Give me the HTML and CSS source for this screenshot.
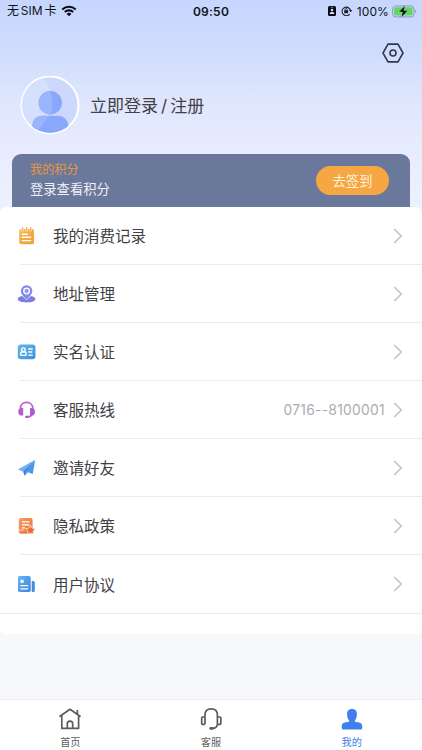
FILE: index.html
```html
<!DOCTYPE html>
<html lang="zh-CN">
<head>
<meta charset="utf-8">
<meta name="viewport" content="width=device-width, initial-scale=1">
<title>我的</title>
<link rel="stylesheet" href="styles.css">
</head>
<body>
<div class="app">
  <header class="header">
    <div class="status">
      <div class="status-left">
        <span class="carrier">无<span class="sim">SIM</span>卡</span>
        <svg class="wifi" width="16" height="12" viewBox="0 0 16 12"><path d="M1.3 4.5a9.7 9.7 0 0 1 13.4 0M3.8 7.1a6.1 6.1 0 0 1 8.4 0" fill="none" stroke="#080b14" stroke-width="2.1"/><path d="M8 11.2 5.6 8.9a3.5 3.5 0 0 1 4.8 0z" fill="#080b14"/></svg>
      </div>
      <span class="time">09:50</span>
      <div class="status-right">
        <svg width="8" height="10" viewBox="0 0 8 10"><rect width="8" height="10" rx="1.5" fill="#0a0c12"/><path d="M2.8 1.3h2.4" stroke="#cbd8fc" stroke-width=".6"/><circle cx="4" cy="4" r="1.3" fill="#cbd8fc"/><path d="M1.6 8c0-3 4.8-3 4.8 0z" fill="#cbd8fc"/></svg>
        <svg class="lock" width="12" height="10" viewBox="0 0 12 10"><path d="M8.7 8.1A4.3 4.3 0 1 1 9.4 4" fill="none" stroke="#20242f" stroke-width="1.1"/><path d="M7.8 4h3.5L9.6 6.2z" fill="#20242f"/><rect x="3.2" y="4.3" width="3.9" height="3" rx=".5" fill="#15181f"/><path d="M4 4.5v-.8a1.15 1.15 0 0 1 2.3 0v.8" fill="none" stroke="#15181f" stroke-width=".8"/></svg>
        <span class="percent">100%</span>
        <svg width="25" height="13" viewBox="0 0 25 13"><rect x=".6" y=".9" width="21.4" height="11" rx="3.2" fill="none" stroke="#8d98b2"/><rect x="2" y="2.3" width="18.6" height="8.2" rx="1.9" fill="#64d468"/><path d="M23.2 4.7c1.4.4 1.4 3 0 3.4z" fill="#8d98b2"/><path d="M13.1.3 6.8 7h3.7l-1.2 5.6 6.5-7h-3.9z" fill="#05100a" stroke="#b9dfcd" stroke-width=".4"/></svg>
      </div>
    </div>
    <div class="toolbar">
      <svg width="22" height="20" viewBox="0 0 22 20" fill="none" stroke="#33384a" stroke-width="1.6" stroke-linejoin="round"><path d="M6 1.1h10l5 8.9-5 8.9H6L1 10z"/><circle cx="11" cy="10" r="3"/></svg>
    </div>
    <div class="profile">
      <svg class="avatar" width="60" height="60" viewBox="0 0 60 60">
        <defs><clipPath id="face"><circle cx="30" cy="29" r="28"/></clipPath></defs>
        <circle cx="30" cy="29" r="28.5" fill="#ccd9fc" stroke="#fff" stroke-width="2"/>
        <g clip-path="url(#face)">
          <path d="M0 0h23q12 18 7 39L12 60H0z" fill="#d5e0fd"/>
          <circle cx="30.3" cy="26.8" r="11.7" fill="#8aa8fb"/>
          <path d="M27 15.6a11.7 11.7 0 0 0-2.4 21.4q3 1.7 6.3 1.4Q34 26 30.5 15.1z" fill="#9bb5fc"/>
          <rect x="12.3" y="39.8" width="36" height="24" rx="10" fill="#8aa8fb"/>
          <path d="M22.3 39.8h7L16 57l-3.7-7.2q0-10 10-10" fill="#9bb5fc"/>
        </g>
      </svg>
      <span class="login">立即登录<span class="slash">/</span>注册</span>
    </div>
    <section class="points">
      <div class="points-text">
        <div class="points-label">我的积分</div>
        <div class="points-hint">登录查看积分</div>
      </div>
      <button class="checkin">去签到</button>
    </section>
  </header>

  <main class="list">
    <div class="row">
      <svg class="icon" viewBox="0 0 20 20"><defs><linearGradient id="gold" x2="1" y2="1"><stop stop-color="#f8bd58"/><stop offset="1" stop-color="#f09b36"/></linearGradient></defs><rect x="2.2" y="3" width="14.8" height="15.2" rx="2" fill="url(#gold)"/><path d="M5.7 1.2v4M9.7 1.2v4M13.7 1.2v4" stroke="#fff" stroke-width="2.2"/><path d="M5.7 1.7v3M9.7 1.7v3M13.7 1.7v3" stroke="#f4ae47" stroke-width="1.3" stroke-linecap="round"/><path d="M5.3 8.2h5M5.3 11.3h8.4M5.3 14.6h8.4" stroke="#fff" stroke-width="1.4" stroke-linecap="round"/></svg>
      <span class="name">我的消费记录</span>
      <svg class="arrow" viewBox="0 0 10 16"><path d="m1.2 1 7 7-7 7"/></svg>
    </div>
    <div class="row">
      <svg class="icon" viewBox="0 0 20 20"><path d="M5.1 12.1C2.4 12.7.8 13.7.8 15c0 2.1 3.8 3.4 8.8 3.4s8.8-1.3 8.8-3.4c0-1.3-1.6-2.3-4.3-2.9l-4.5 4z" fill="#7980df"/><path d="M9.6 15.6C6.6 12.8 3.8 10 3.8 7.1a5.8 5.8 0 0 1 11.6 0c0 2.9-2.8 5.7-5.8 8.5z" fill="#8289ec"/><circle cx="9.6" cy="7" r="2.8" fill="#9299ef" stroke="#fff" stroke-width="1.3"/></svg>
      <span class="name">地址管理</span>
      <svg class="arrow" viewBox="0 0 10 16"><path d="m1.2 1 7 7-7 7"/></svg>
    </div>
    <div class="row">
      <svg class="icon" viewBox="0 0 20 20"><defs><linearGradient id="sky" x2="1" y2="1"><stop stop-color="#62b7ed"/><stop offset="1" stop-color="#3d91db"/></linearGradient></defs><rect x=".8" y="2.5" width="17.7" height="14.7" rx="3" fill="url(#sky)"/><g fill="none" stroke="#fff" stroke-width="1.4"><circle cx="6.4" cy="7.7" r="1.8"/><rect x="3.6" y="10" width="5.6" height="3.4" rx="1.5"/><path d="M11.3 7h4.4M11.3 10h4M11.3 13.1h4.4"/></g></svg>
      <span class="name">实名认证</span>
      <svg class="arrow" viewBox="0 0 10 16"><path d="m1.2 1 7 7-7 7"/></svg>
    </div>
    <div class="row">
      <svg class="icon" viewBox="0 0 20 20"><defs><linearGradient id="violet" x2="1" y2="1"><stop stop-color="#c55bcf"/><stop offset="1" stop-color="#9c60d6"/></linearGradient></defs><path d="M3.4 9.5V8.4C3.4 4.8 6 2.4 9.6 2.4s6.2 2.4 6.2 6v1.1M15.8 12q-.2 4.3-4.7 4.8" fill="none" stroke="#b95fce" stroke-width="1.7"/><path d="M6.2 8v7.5H4.4C2.3 15.5 1.2 14 1.2 11.8S2.3 8 4.4 8zM13 8v7.5h1.8c2.1 0 3.2-1.5 3.2-3.7S16.9 8 14.8 8z" fill="url(#violet)"/><rect x="8" y="15.7" width="4.2" height="2.3" rx="1.1" fill="#ae60d0"/></svg>
      <span class="name">客服热线</span>
      <span class="phone">0716--8100001</span>
      <svg class="arrow" viewBox="0 0 10 16"><path d="m1.2 1 7 7-7 7"/></svg>
    </div>
    <div class="row">
      <svg class="icon" viewBox="0 0 20 20"><path d="M18.2 1.8.9 11.6l5.2 2.1z" fill="#69b1f0"/><path d="m18.2 1.8-2.4 14.1-6.4-2.2z" fill="#4e97e6"/><path d="M18.2 1.8 6.1 13.7l1.7 4.2 1.6-4.2z" fill="#347dd0"/><path d="m7.8 17.9 3.3-3.6-1.7-.6z" fill="#65aaea"/></svg>
      <span class="name">邀请好友</span>
      <svg class="arrow" viewBox="0 0 10 16"><path d="m1.2 1 7 7-7 7"/></svg>
    </div>
    <div class="row">
      <svg class="icon" viewBox="0 0 20 20"><defs><linearGradient id="coral" x2="1" y2="1"><stop stop-color="#f4a064"/><stop offset="1" stop-color="#e96d36"/></linearGradient></defs><rect x="1.8" y="2" width="13.8" height="15.8" rx="2" fill="url(#coral)"/><path d="M5 5.8h7.6M5 8.8h7.6M5 11.8h3" fill="none" stroke="#fff" stroke-width="1.3"/><path d="M1.8 14h5.4" stroke="#fff" stroke-width=".7"/><path d="m13.6 9.4 1.5 2.7 3.3.7-2.2 2.4.4 3.1-3-1.4-3 1.4.4-3.1-2.2-2.4 3.3-.7z" fill="#e76a34" stroke="#fff" stroke-width=".7"/></svg>
      <span class="name">隐私政策</span>
      <svg class="arrow" viewBox="0 0 10 16"><path d="m1.2 1 7 7-7 7"/></svg>
    </div>
    <div class="row last">
      <svg class="icon" viewBox="0 0 20 20"><defs><linearGradient id="azure" x2="1" y2="1"><stop stop-color="#65b6ef"/><stop offset="1" stop-color="#3a83df"/></linearGradient></defs><rect x="1" y="2" width="12.7" height="16" rx="1.7" fill="url(#azure)"/><path d="M14.7 7h1.6q1.5 0 1.5 1.5v8q0 1.5-1.5 1.5h-1.6z" fill="#438cdf"/><rect x="3.5" y="5.8" width="3.1" height="3.1" fill="#fff"/><path d="M3.5 11.6h7.8M3.5 14.8h7.8" stroke="#fff" stroke-width="1.3"/></svg>
      <span class="name">用户协议</span>
      <svg class="arrow" viewBox="0 0 10 16"><path d="m1.2 1 7 7-7 7"/></svg>
    </div>
  </main>

  <nav class="tabs">
    <a class="tab">
      <svg width="24" height="24" viewBox="0 0 24 24" fill="none" stroke="#5b5c60" stroke-width="1.7" stroke-linejoin="round" stroke-linecap="round"><path d="m2 9.3 10-7 10 7M3.8 8.3v13h16.8v-13M19.4 7V3.6M9.3 21v-4.2a2.7 2.7 0 0 1 5.4 0V21"/></svg>
      <span>首页</span>
    </a>
    <a class="tab">
      <svg width="24" height="24" viewBox="0 0 24 24" fill="none" stroke="#5b5c60" stroke-width="1.7" stroke-linejoin="round"><path d="M6 17.3V8q0-6.2 6.2-6.2T18.4 8v9.3q-.5 3.8-5.2 4.2M6 10H3.4q-.7 0-.7.7v5.9q0 .7.7.7H6M18.4 10h2.7q.7 0 .7.7v5.9q0 .7-.7.7h-2.7"/><path d="M11.7 21.4h1.6" stroke-width="2.8" stroke-linecap="round"/></svg>
      <span>客服</span>
    </a>
    <a class="tab active">
      <svg width="24" height="24" viewBox="0 0 24 24"><path d="M12 1.9c3.5 0 5.1 2.2 4.9 5.5-.1 2.5-.7 4.5-1.9 5.8-.5 1.3.1 1.6 1.5 1.9 4 .6 5.7 1.4 5.7 4.2v1.8q0 1.5-1.5 1.5H3.3q-1.5 0-1.5-1.5v-1.8c0-2.8 1.7-3.6 5.7-4.2 1.4-.3 2-.6 1.5-1.9-1.2-1.3-1.8-3.3-1.9-5.8-.2-3.3 1.4-5.5 4.9-5.5z" fill="#417fee"/></svg>
      <span>我的</span>
    </a>
  </nav>
</div>
</body>
</html>
```
FILE: styles.css
```css
* { box-sizing: border-box; }
body {
  margin: 0;
  font-family: Inter, "Noto Sans CJK SC", sans-serif;
  color: #404145;
}
svg { display: block; flex: none; }
.app {
  display: flex;
  flex-direction: column;
  height: 750px;
  overflow: hidden;
  background: #f7f8fb;
}
.header {
  flex: none;
  height: 212px;
  margin-bottom: -5px;
  background: linear-gradient(#c7d6fe 0, #d0dcfd 50px, #dfe6fd 100px, #e8ecfe 154px, #eef1fe 212px);
}
.status {
  display: grid;
  grid-template-columns: 1fr auto 1fr;
  align-items: center;
  height: 22px;
  padding: 0 5px 0 7px;
  color: #10131c;
}
.status-left, .status-right { display: flex; align-items: center; }
.status-left { margin-top: -1px; }
.status-right { justify-content: flex-end; }
.carrier { padding-top: 1px; font-size: 12px; line-height: 20px; letter-spacing: .2px; }
.sim { margin: 0 2px 0 1.5px; letter-spacing: 0; }
.wifi { margin-left: 4px; }
.time { position: relative; left: -1px; font-size: 12px; font-weight: 600; letter-spacing: .25px; }
.lock { margin-left: 5px; }
.percent { margin: 0 3px 0 4px; font-size: 12px; letter-spacing: .1px; }
.toolbar {
  display: flex;
  justify-content: flex-end;
  height: 54px;
  padding: 21px 18px 0 0;
}
.profile {
  display: flex;
  align-items: center;
  height: 60px;
  padding-left: 20px;
}
.login { margin-left: 10px; font-size: 17px; line-height: 24px; }
.slash { margin: 0 3px; }
.points {
  display: flex;
  justify-content: space-between;
  height: 58px;
  margin: 18px 12px 0;
  padding: 6px 21px 0 18px;
  border-radius: 9px 9px 0 0;
  background: #6a789b;
}
.points-label { font-size: 12.2px; line-height: 19px; color: #e9963d; }
.points-hint { font-size: 13.3px; line-height: 20px; color: #f0f2f7; }
.checkin {
  width: 73px;
  height: 29px;
  margin-top: 6px;
  padding: 0;
  border: 0;
  border-radius: 15px;
  background: #f6a642;
  color: #fff3dc;
  font: 13.3px/28px "Noto Sans CJK SC", sans-serif;
}
.list {
  flex: none;
  height: 427px;
  border-radius: 6px;
  background: #fff;
}
.row {
  display: flex;
  align-items: center;
  height: 58px;
  margin-left: 20px;
  padding-right: 19px;
  border-bottom: 1px solid #ebebed;
}
.row.last { height: 59px; margin-left: 0; padding-left: 20px; }
.icon { width: 20px; height: 20px; margin-left: -3px; }
.name { margin-left: 16px; padding-top: 3px; font-size: 15.5px; line-height: 24px; }
.phone { margin: 0 8px 0 auto; font-size: 13.8px; letter-spacing: .3px; color: #acacae; }
.arrow { width: 10px; height: 16px; margin-left: auto; fill: none; stroke: #c3c3c6; stroke-width: 1.6; }
.phone + .arrow { margin-left: 0; }
.tabs {
  display: grid;
  grid-template-columns: repeat(3, 1fr);
  height: 51px;
  margin-top: auto;
  border-top: 1px solid #efeff1;
  background: #fff;
}
.tab {
  display: flex;
  flex-direction: column;
  align-items: center;
  padding-top: 7px;
  font-size: 10.2px;
  line-height: 15px;
  color: #5f6064;
}
.tab span { margin-top: 4px; }
.active { color: #417fee; }
```
